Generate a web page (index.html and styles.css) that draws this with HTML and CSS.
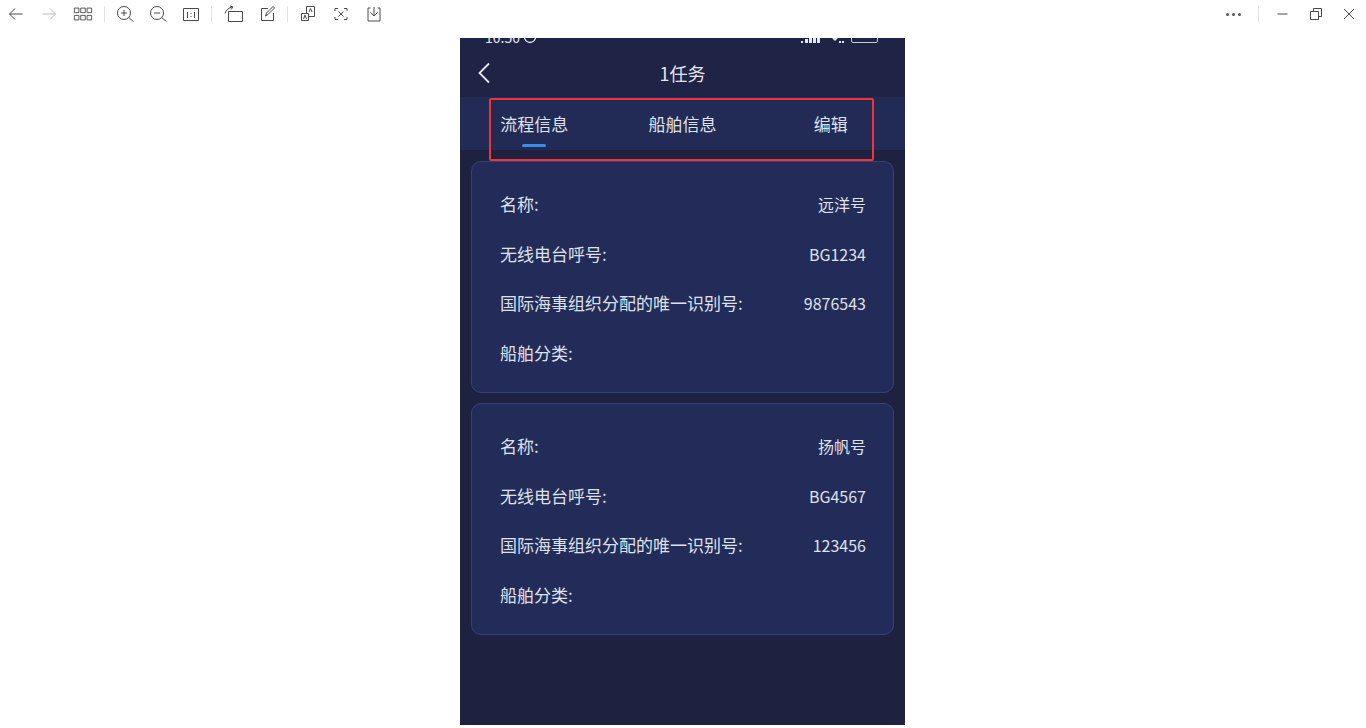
FILE: index.html
```html
<!DOCTYPE html>
<html lang="zh-CN">
<head>
    <meta charset="UTF-8">
    <meta name="viewport" content="width=device-width, initial-scale=1.0">
    <title>图片查看器</title>
    <link rel="stylesheet" href="styles.css">
</head>
<body>

<header class="toolbar">
    <div class="tools">
        <svg class="tool" viewBox="0 0 18 18"><path d="M15.500 9H2.500M8 3.500 2.500 9 8 14.500"/></svg>
        <svg class="tool tool-off" viewBox="0 0 18 18"><path d="M2.500 9h13M10 3.500 15.500 9 10 14.500"/></svg>
        <svg class="tool tool-wide" viewBox="0 0 22 18"><path d="M1.500 2.500h5v5h-5zM8.500 2.500h5v5h-5zM15.500 2.500h5v5h-5zM1.500 10.500h5v5h-5zM8.500 10.500h5v5h-5zM15.500 10.500h5v5h-5z"/></svg>
        <span class="sep"></span>
        <svg class="tool" viewBox="0 0 18 18"><circle cx="8" cy="8" r="6.500"/><path d="M5 8h6M8 5v6M12.500 12.500l5 4"/></svg>
        <svg class="tool" viewBox="0 0 18 18"><circle cx="8" cy="8" r="6.500"/><path d="M5 8h6M12.500 12.500l5 4"/></svg>
        <svg class="tool" viewBox="0 0 18 18"><path d="M1.500 3.500h15v12h-15zM5.500 7v6M12.500 7v6M9 8v1M9 11v1"/></svg>
        <span class="sep"></span>
        <svg class="tool tool-wide" viewBox="0 0 20 18"><path d="M5.500 6.500h14v10h-14zM2 8.500C3 5 6 2.500 9.500 2M7 1l3 1-2 2.500"/></svg>
        <svg class="tool" viewBox="0 0 18 18"><path d="M15.500 8v7.500h-12v-12H10M7.500 11l1-3L15 1.500l1.500 1.500L10 9.500z"/></svg>
        <span class="sep"></span>
        <svg class="tool" viewBox="0 0 18 18"><path d="M2.500 8.500h7v7h-7zM9.500 11.500h6v-10h-8v7M4.500 14l1.500-4 1.500 4M10 7l1.500-3.500L13 7"/></svg>
        <svg class="tool" viewBox="0 0 18 18"><path d="M3 6V3.500h3M12 3.500h3V6M3 12v2.500h3M12 14.500h3V12M6.500 6.500l5 5M11.500 6.500l-5 5"/></svg>
        <svg class="tool" viewBox="0 0 18 18"><path d="M5.500 3H3v13h12V3h-2.500M9 2v9M5.500 7.500 9 11l3.500-3.500"/></svg>
    </div>
    <div class="win-btns">
        <span class="dots"><i></i><i></i><i></i></span>
        <span class="sep"></span>
        <svg class="tool" viewBox="0 0 18 18"><path d="M3.500 9h10"/></svg>
        <svg class="tool" viewBox="0 0 18 18"><path d="M3.500 6.500h8v8h-8zM6.500 6.500v-3h8v8h-3"/></svg>
        <svg class="tool" viewBox="0 0 18 18"><path d="M4 4l10 10M14 4 4 14"/></svg>
    </div>
</header>

<main class="viewer">
    <div class="phone">
        <div class="status-bar">
            <span class="time">10:50
                <svg class="clock" viewBox="0 0 14 14"><circle cx="7" cy="7" r="5.500"/><path d="M7 4v3h2.500"/></svg>
            </span>
            <span class="signal">
                <svg class="bars" width="19" height="6" viewBox="0 0 19 6"><path d="M0 4h2v2H0zM4 2h3v4H4zM8 0h3v6H8zM12 0h3v6h-3zM16 0h3v6h-3z"/></svg>
                <svg width="15" height="6" viewBox="0 0 15 6"><path d="M1 0h8L5 4zM9 4h2v2H9zM12 4h2v2h-2z"/></svg>
                <span class="battery"></span>
            </span>
        </div>

        <div class="title-bar">
            <svg class="back" viewBox="0 0 14 22"><path d="M11 1.500 1.500 11 11 20.500"/></svg>
            <h1>1任务</h1>
        </div>

        <nav class="tabs">
            <a class="tab active">流程信息</a>
            <a class="tab">船舶信息</a>
            <a class="tab">编辑</a>
            <div class="mark"></div>
        </nav>

        <section class="ship-card">
            <p class="row"><span>名称:</span><span class="value">远洋号</span></p>
            <p class="row"><span>无线电台呼号:</span><span class="value">BG1234</span></p>
            <p class="row"><span>国际海事组织分配的唯一识别号:</span><span class="value">9876543</span></p>
            <p class="row"><span>船舶分类:</span></p>
        </section>

        <section class="ship-card">
            <p class="row"><span>名称:</span><span class="value">扬帆号</span></p>
            <p class="row"><span>无线电台呼号:</span><span class="value">BG4567</span></p>
            <p class="row"><span>国际海事组织分配的唯一识别号:</span><span class="value">123456</span></p>
            <p class="row"><span>船舶分类:</span></p>
        </section>
    </div>
</main>

</body>
</html>
```

FILE: styles.css
```css
* {
    margin: 0;
    padding: 0;
    box-sizing: border-box;
}

body {
    background-color: #fff;
    font-family: "Noto Sans CJK SC", "Noto Sans", sans-serif;
    overflow: hidden;
}

.toolbar {
    display: flex;
    justify-content: space-between;
    height: 38px;
    padding-top: 5px;
}

.tools,
.win-btns {
    display: flex;
    align-items: flex-start;
    gap: 15px;
}

.tools {
    padding-left: 7px;
}

.win-btns {
    padding-right: 8px;
}

.tool {
    flex-shrink: 0;
    width: 18px;
    height: 18px;
    fill: none;
    stroke: #4a4a4a;
    stroke-width: 1;
}

.tool-off {
    stroke: #bbb;
}

.tool-wide {
    width: 20px;
}

.sep {
    width: 1px;
    height: 16px;
    background-color: #e2e2e2;
    margin: 1px -4px 0;
}

.win-btns .sep {
    margin: 1px 0 0;
}

.dots {
    display: flex;
    gap: 3px;
    padding-top: 8px;
    margin-right: 2px;
}

.dots i {
    width: 3px;
    height: 3px;
    border-radius: 50%;
    background-color: #555;
}

.viewer {
    display: flex;
    justify-content: center;
    padding-right: 1px;
}

.phone {
    position: relative;
    width: 445px;
    height: 687px;
    background-color: #1f2140;
    color: #e4e6ee;
}

.status-bar {
    display: flex;
    justify-content: space-between;
    align-items: flex-end;
    height: 6px;
    padding: 0 27px 0 25px;
    overflow: hidden;
    background-color: #1f2346;
}

.time {
    display: flex;
    align-items: center;
    gap: 3px;
    font-size: 14px;
    line-height: 14px;
    flex-shrink: 0;
}

.clock {
    width: 14px;
    height: 14px;
    fill: none;
    stroke: #e4e6ee;
    stroke-width: 1.300;
}

.signal {
    display: flex;
    align-items: flex-end;
    gap: 6px;
    margin-bottom: 1px;
    fill: #e4e6ee;
}

.bars {
    margin-right: 4px;
}

.battery {
    width: 27px;
    height: 12px;
    border: 1px solid #c8cad6;
    border-radius: 2px;
}

.title-bar {
    position: relative;
    display: flex;
    justify-content: center;
    align-items: center;
    height: 53px;
    padding-top: 5px;
    background-color: #1f2346;
}

.title-bar h1 {
    font-size: 18px;
    font-weight: 400;
    line-height: 24px;
}

.back {
    position: absolute;
    left: 18px;
    top: 18px;
    width: 14px;
    height: 22px;
    fill: none;
    stroke: #e4e6ee;
    stroke-width: 1.800;
}

.tabs {
    position: relative;
    display: flex;
    height: 53px;
    background-color: #222b55;
}

.tab {
    display: flex;
    flex: 1;
    justify-content: center;
    padding-top: 16px;
    font-size: 17px;
    line-height: 22px;
    color: #dfe2ea;
}

/* annotation drawn on top of the screenshot */
.tabs::after {
    content: "";
    position: absolute;
    left: 29px;
    top: 1px;
    box-sizing: border-box;
    width: 385px;
    height: 63px;
    border: 2px solid #f0343a;
    border-radius: 2px;
}

.mark {
    position: absolute;
    left: 62px;
    top: 47px;
    width: 24px;
    height: 3px;
    border-radius: 2px;
    background-color: #3a8ee8;
}

.ship-card {
    display: flex;
    flex-direction: column;
    height: 232px;
    margin: 11px 11px 0;
    padding: 17px 27px 0 28px;
    background-color: #232c59;
    border: 1px solid #364277;
    border-radius: 10px;
}

.ship-card + .ship-card {
    margin-top: 10px;
}

.row {
    display: flex;
    justify-content: space-between;
    align-items: center;
    height: 49.700px;
    font-size: 17px;
    line-height: 24px;
    color: #dfe1e9;
}

.value {
    font-size: 16px;
}
```
